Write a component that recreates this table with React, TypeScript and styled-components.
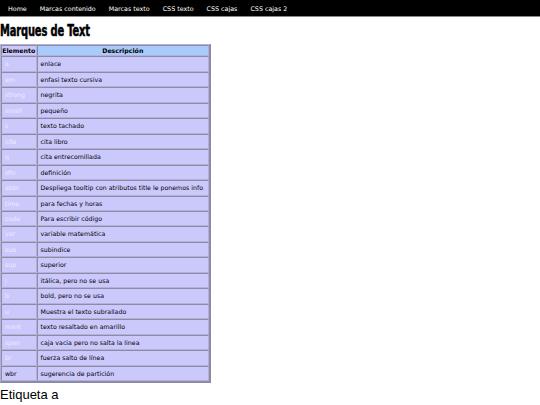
import React from "react";
import styled, { createGlobalStyle } from "styled-components";

const Global = createGlobalStyle`
  html, body { margin: 0; padding: 0; background: #fff; }
  body { font-family: "DejaVu Sans", Verdana, sans-serif; }
`;

const Nav = styled.nav`
  background: #000;
  border-bottom: 1px solid #8a8a8a;
  height: 16px;
  display: flex;
  align-items: center;
  gap: 13px;
  padding-left: 8px;
`;

const NavLink = styled.a`
  color: #fff;
  font-size: 6.35px;
  text-decoration: none;
  font-family: "DejaVu Sans", Verdana, sans-serif;
`;

const TitleRow = styled.div`
  margin: 4px 0 6px 0;
  height: 17px;
`;

const Title = styled.h1`
  display: inline-block;
  margin: 0;
  font-family: "DejaVu Sans Condensed", "DejaVu Sans", sans-serif;
  font-weight: bold;
  font-size: 15.5px;
  line-height: 17px;
  letter-spacing: -0.2px;
  -webkit-text-stroke: 0.5px #000;
  color: #000;
  white-space: nowrap;
  transform: scaleX(0.71);
  transform-origin: left center;
`;

const Table = styled.table`
  border-top: 1px solid #b4b2d4;
  border-left: 1px solid #b4b2d4;
  border-right: 2px solid #8c8aa8;
  border-bottom: 2px solid #8c8aa8;
  border-spacing: 0;
  background: #cbc9fc;
  width: 211px;
  font-size: 6.25px;
  font-family: "DejaVu Sans", Verdana, sans-serif;
`;

const Th = styled.th<{ $blue?: boolean }>`
  background: ${(p) => (p.$blue ? "#a9cbfb" : "#cbc9fc")};
  border-top: 1px solid #8c8aa8;
  border-left: 1px solid #8c8aa8;
  border-right: 1px solid #b4b2d4;
  border-bottom: 1px solid #b4b2d4;
  font-weight: bold;
  color: #000;
  line-height: 7.45px;
  padding: 1px 0;
  text-align: center;
  white-space: nowrap;
`;

const Td = styled.td<{ $tag?: boolean; $dark?: boolean }>`
  background: #cbc9fc;
  border-top: 1px solid #8c8aa8;
  border-left: 1px solid #8c8aa8;
  border-right: 1px solid #b4b2d4;
  border-bottom: 1px solid #b4b2d4;
  color: ${(p) => (p.$tag && !p.$dark ? "#ececff" : "#000")};
  line-height: 7.45px;
  padding: 3px 3px;
  white-space: nowrap;
`;

const Sub = styled.h2`
  margin: 4px 0 0 0;
  font-family: "Liberation Sans", Arial, sans-serif;
  font-weight: normal;
  font-size: 13px;
  line-height: 15px;
  color: #000;
`;

const rows: [string, string][] = [
  ["a", "enlace"],
  ["em", "enfasi texto cursiva"],
  ["strong", "negrita"],
  ["small", "pequeño"],
  ["s", "texto tachado"],
  ["cite", "cita libro"],
  ["q", "cita entrecomillada"],
  ["dfn", "definición"],
  ["abbr", "Despliega tooltip con atributos title le ponemos info"],
  ["time", "para fechas y horas"],
  ["code", "Para escribir código"],
  ["var", "variable matemática"],
  ["sub", "subindice"],
  ["sup", "superior"],
  ["i", "itálica, pero no se usa"],
  ["b", "bold, pero no se usa"],
  ["u", "Muestra el texto subrallado"],
  ["mark", "texto resaltado en amarillo"],
  ["span", "caja vacia pero no salta la linea"],
  ["br", "fuerza salto de línea"],
  ["wbr", "sugerencia de partición"],
];

const links = ["Home", "Marcas contenido", "Marcas texto", "CSS texto", "CSS cajas", "CSS cajas 2"];

export default function App() {
  return (
    <>
      <Global />
      <Nav>
        {links.map((l) => (
          <NavLink key={l} href="#">{l}</NavLink>
        ))}
      </Nav>
      <TitleRow>
        <Title>Marques de Text</Title>
      </TitleRow>
      <Table>
        <thead>
          <tr>
            <Th>Elemento</Th>
            <Th $blue>Descripción</Th>
          </tr>
        </thead>
        <tbody>
          {rows.map(([t, d]) => (
            <tr key={t}>
              <Td $tag $dark={t === "wbr"}>{t}</Td>
              <Td>{d}</Td>
            </tr>
          ))}
        </tbody>
      </Table>
      <Sub>Etiqueta a</Sub>
    </>
  );
}
